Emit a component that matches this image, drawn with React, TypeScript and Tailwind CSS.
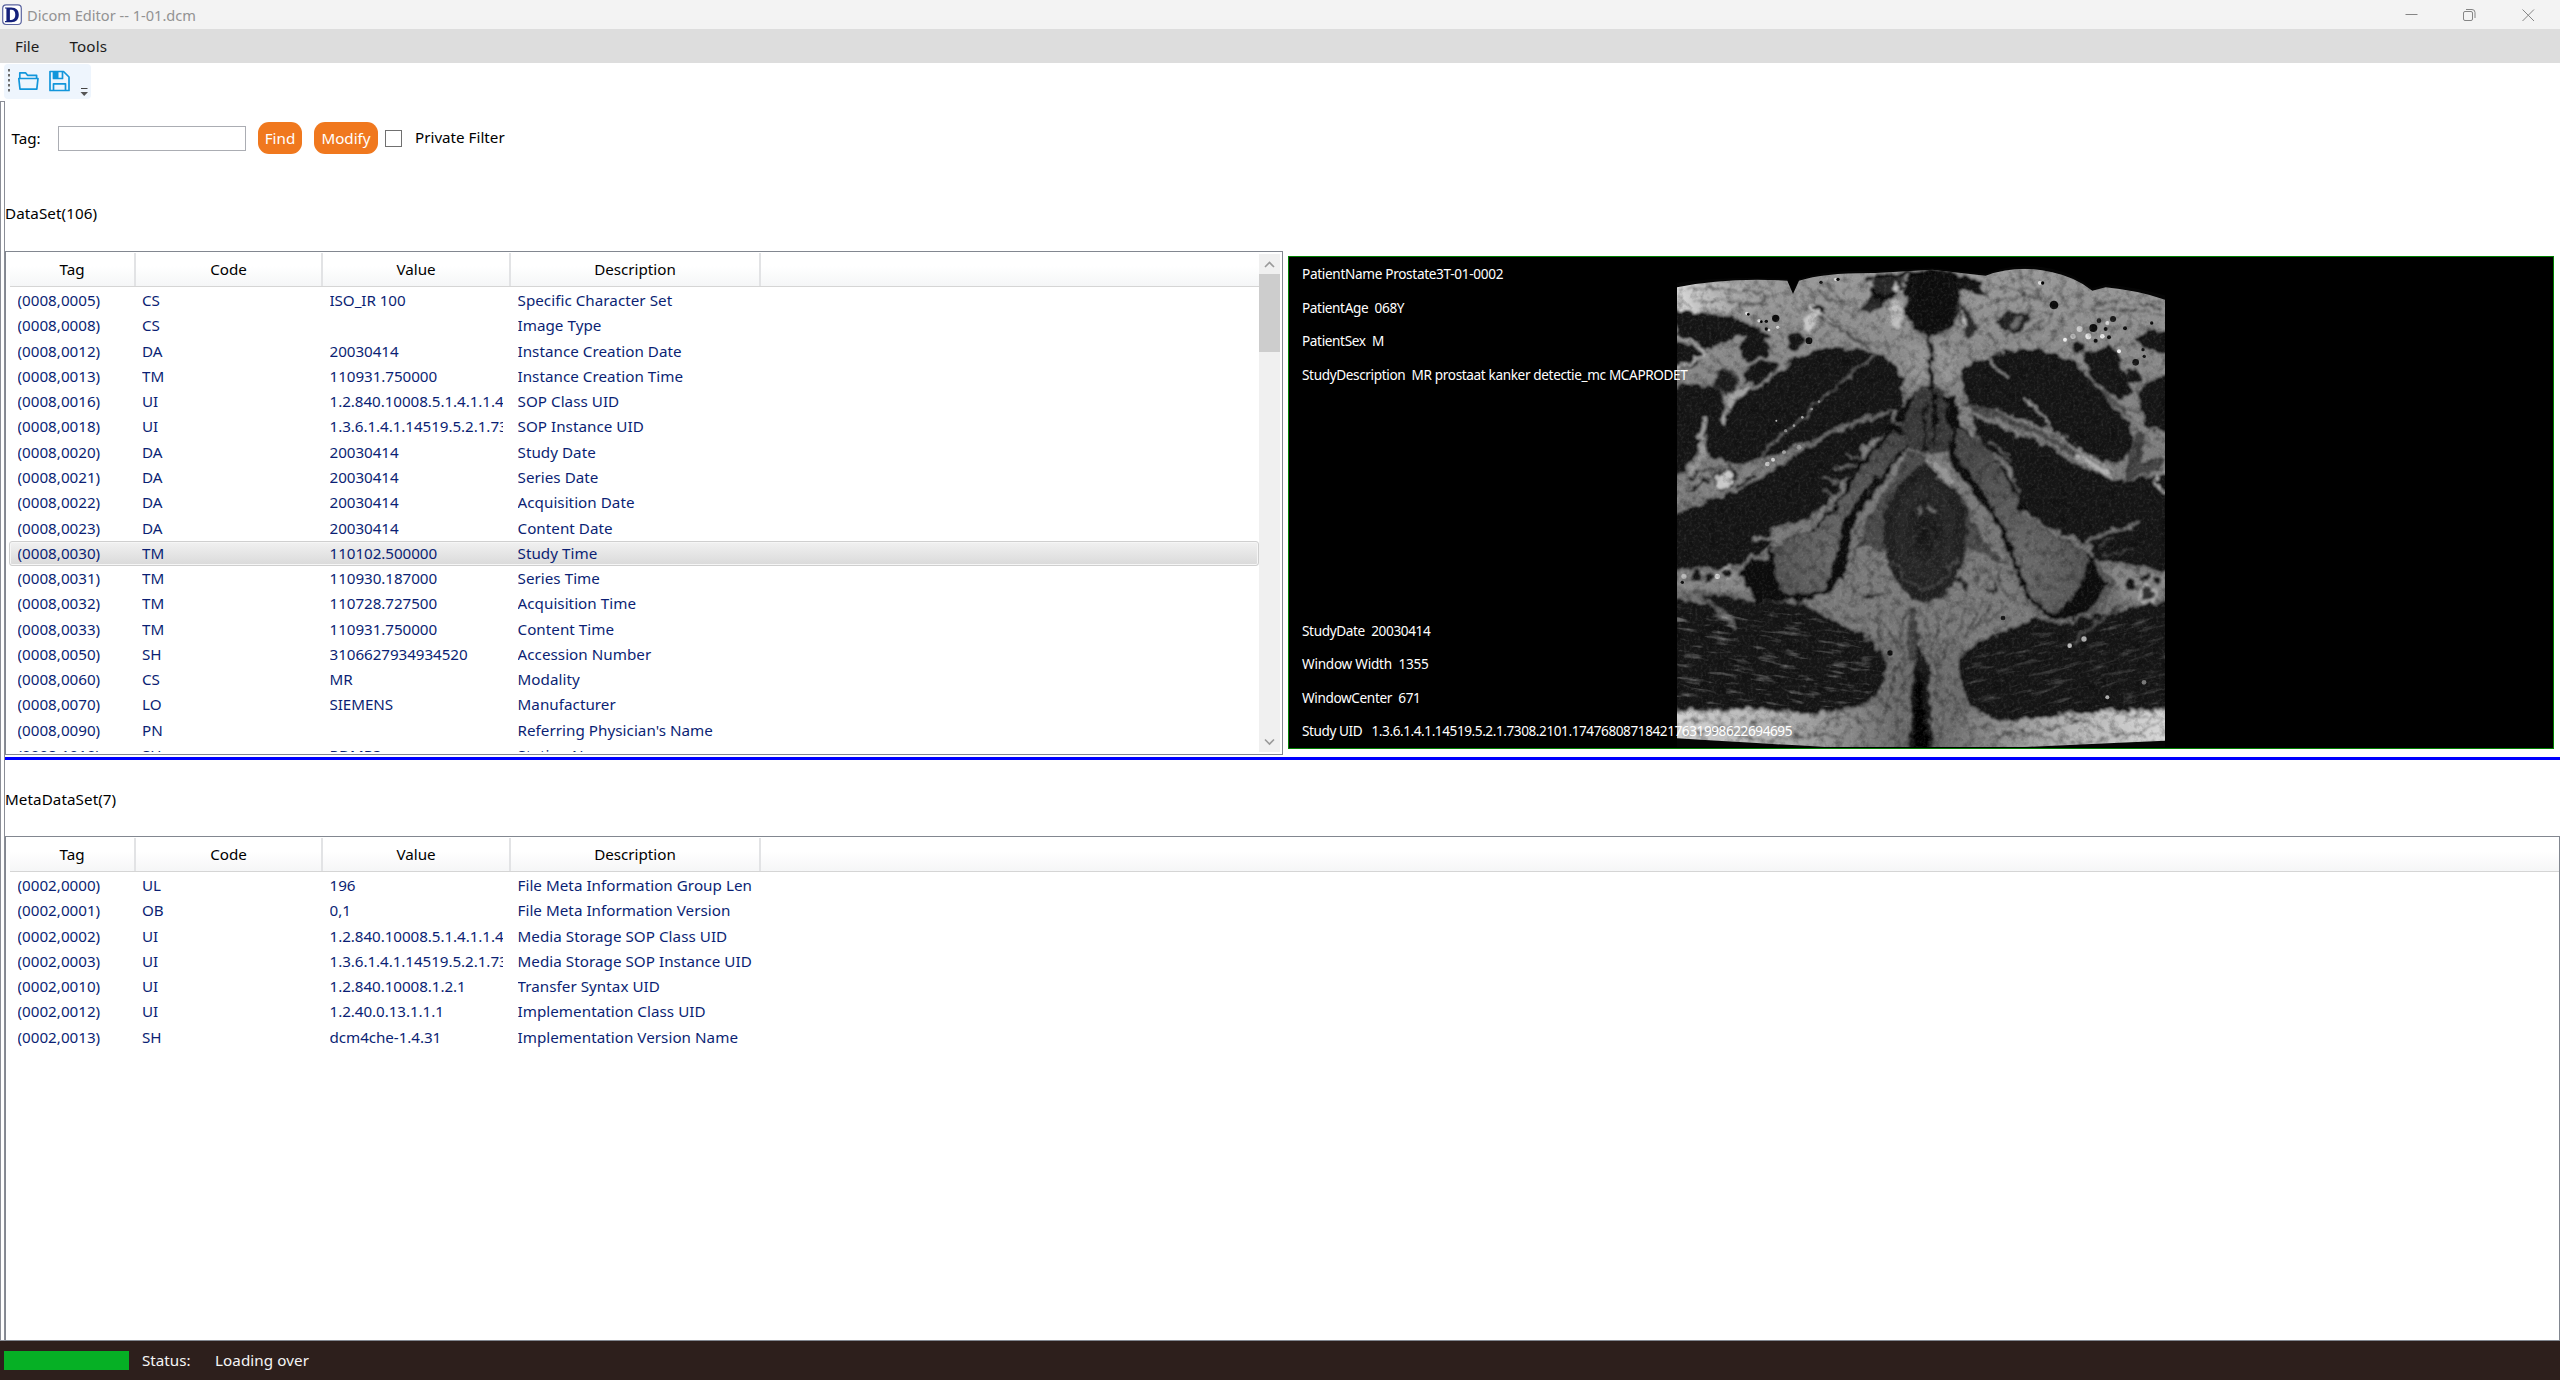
import React from "react";

type Row = [string, string, string, string];

const dataSet: Row[] = [
  ["(0008,0005)", "CS", "ISO_IR 100", "Specific Character Set"],
  ["(0008,0008)", "CS", "", "Image Type"],
  ["(0008,0012)", "DA", "20030414", "Instance Creation Date"],
  ["(0008,0013)", "TM", "110931.750000", "Instance Creation Time"],
  ["(0008,0016)", "UI", "1.2.840.10008.5.1.4.1.1.4", "SOP Class UID"],
  ["(0008,0018)", "UI", "1.3.6.1.4.1.14519.5.2.1.7308", "SOP Instance UID"],
  ["(0008,0020)", "DA", "20030414", "Study Date"],
  ["(0008,0021)", "DA", "20030414", "Series Date"],
  ["(0008,0022)", "DA", "20030414", "Acquisition Date"],
  ["(0008,0023)", "DA", "20030414", "Content Date"],
  ["(0008,0030)", "TM", "110102.500000", "Study Time"],
  ["(0008,0031)", "TM", "110930.187000", "Series Time"],
  ["(0008,0032)", "TM", "110728.727500", "Acquisition Time"],
  ["(0008,0033)", "TM", "110931.750000", "Content Time"],
  ["(0008,0050)", "SH", "3106627934934520", "Accession Number"],
  ["(0008,0060)", "CS", "MR", "Modality"],
  ["(0008,0070)", "LO", "SIEMENS", "Manufacturer"],
  ["(0008,0090)", "PN", "", "Referring Physician's Name"],
  ["(0008,1010)", "SH", "RDMR3", "Station Name"],
];

const metaDataSet: Row[] = [
  ["(0002,0000)", "UL", "196", "File Meta Information Group Len"],
  ["(0002,0001)", "OB", "0,1", "File Meta Information Version"],
  ["(0002,0002)", "UI", "1.2.840.10008.5.1.4.1.1.4", "Media Storage SOP Class UID"],
  ["(0002,0003)", "UI", "1.3.6.1.4.1.14519.5.2.1.7308", "Media Storage SOP Instance UID"],
  ["(0002,0010)", "UI", "1.2.840.10008.1.2.1", "Transfer Syntax UID"],
  ["(0002,0012)", "UI", "1.2.40.0.13.1.1.1", "Implementation Class UID"],
  ["(0002,0013)", "SH", "dcm4che-1.4.31", "Implementation Version Name"],
];

function Table({ rows, selected }: { rows: Row[]; selected?: number }) {
  const head = "flex items-center justify-center border-r-2 border-[#e2e3e5] pb-[1px]";
  const cell = "overflow-hidden whitespace-nowrap";
  return (
    <div className="mb-[2px] flex min-w-0 flex-1 flex-col overflow-hidden pl-[3px]">
      <div className="ml-[1px] mt-[1px] flex h-[34px] shrink-0 border-b border-[#d5d5d5] bg-gradient-to-b from-white from-40% to-[#f5f6f7] text-black">
        <div className={`${head} w-[126px]`}>Tag</div>
        <div className={`${head} w-[187px]`}>Code</div>
        <div className={`${head} w-[188px]`}>Value</div>
        <div className={`${head} w-[250px]`}>Description</div>
      </div>
      <div className="pt-[1px]">
        {rows.map((r, i) => (
          <div
            key={r[0]}
            className={
              i === selected
                ? "flex h-[25.27px] items-center rounded-[3px] border border-[#cfcfcf] bg-gradient-to-b from-[#f1f1f1] to-[#dadada] pb-[1px] pl-[7.500px] text-[#0b1f74] shadow-[inset_0_0_0_1px_#f6f6f6]"
                : "flex h-[25.27px] items-center pb-[1px] pl-[8.500px] text-[#0b1f74]"
            }
          >
            <div className={`${cell} w-[124.500px]`}>{r[0]}</div>
            <div className={`${cell} w-[187.500px]`}>{r[1]}</div>
            <div className={`${cell} mr-[14.500px] w-[173.500px] tracking-[-0.060px]`}>{r[2]}</div>
            <div className={`${cell} w-[238px] tracking-[0.040px]`}>{r[3]}</div>
          </div>
        ))}
      </div>
    </div>
  );
}

function Chevron({ d }: { d: string }) {
  return (
    <svg width="21" height="22" viewBox="0 0 21 22" fill="none" stroke="#9a9a9a" strokeWidth="1.6">
      <path d={d} />
    </svg>
  );
}

const specks: [number, number, number, string][] = [
  [263, 193, 5, "#ddd"], [268, 196, 4, "#000"], [300, 215, 5, "#eee"], [307, 218, 4, "#000"], [322, 217, 5, "#000"],
  [350, 208, 11, "#0c0c0c"], [322, 240, 5, "#111"], [356, 235, 5, "#eee"], [330, 243, 4, "#ddd"], [486, 100, 5, "#111"],
  [530, 91, 5, "#ddd"], [537, 91, 5, "#000"], [1143, 101, 6, "#eee"], [1151, 102, 5, "#000"], [1185, 168, 13, "#0e0e0e"],
  [1303, 237, 12, "#111"], [1288, 262, 9, "#eee"], [1330, 262, 7, "#eee"], [1242, 262, 8, "#ddd"],
  [1262, 240, 9, "#ccc"], [1218, 272, 6, "#eee"], [1340, 240, 6, "#111"], [1362, 210, 9, "#1a1a1a"], [1398, 238, 6, "#111"],
  [1478, 222, 5, "#111"], [1380, 307, 6, "#eee"], [1452, 302, 5, "#111"], [1456, 322, 5, "#111"],
  [1430, 340, 10, "#151515"], [1320, 215, 7, "#222"], [1350, 265, 6, "#111"], [1310, 275, 6, "#0e0e0e"], [1345, 222, 6, "#ddd"],
  [693, 1212, 8, "#111"], [1032, 1107, 7, "#151515"], [1232, 1190, 7, "#bbb"], [1275, 1170, 8, "#aaa"], [1345, 1345, 6, "#bbb"],
  [1455, 1300, 7, "#777"], [75, 982, 8, "#bbb"], [70, 1000, 5, "#111"], [450, 275, 10, "#111"], [175, 982, 8, "#ddd"],
  [352, 515, 3, "#bbb"], [380, 545, 5, "#999"], [405, 530, 4, "#aaa"], [430, 505, 4, "#aaa"], [458, 480, 4, "#999"],
  [480, 458, 4, "#888"], [325, 645, 7, "#ccc"], [342, 632, 6, "#ddd"], [375, 610, 6, "#aaa"], [420, 595, 7, "#aaa"],
];

const fatLines = [
  "M110 150Q220 165 330 165M90 120Q200 110 330 140M430 120Q520 130 590 210M440 180Q520 230 600 280M480 200Q560 250 640 300M500 100Q540 150 560 170M330 130Q300 170 240 170",
  "M1000 110Q1070 130 1150 120M1010 160Q1080 130 1180 150M1080 70Q1100 120 1090 170M1190 180Q1160 230 1120 260M1240 190Q1380 170 1518 200M1220 210Q1180 250 1160 290M1300 170Q1400 150 1510 180",
  "M1030 260Q1100 220 1140 200M1050 275Q1120 240 1150 215M970 230L1010 280M1210 110Q1190 150 1230 180M1120 90L1145 150",
  "M740 1080Q720 1180 735 1290M700 1080Q735 1130 715 1210M660 1110Q710 1150 700 1190M830 1080Q850 1190 835 1290M870 1070Q870 1160 850 1250M920 1070Q900 1150 880 1180M960 1060Q950 1120 910 1170M800 1100Q810 1200 830 1250",
  "M620 1090Q660 1120 670 1170M1000 1070Q960 1120 940 1140M1040 1080Q1000 1100 980 1130M700 1310Q690 1370 660 1420M740 1300Q700 1370 720 1450M830 1320Q860 1380 850 1460M880 1330Q900 1390 930 1420M720 1240Q700 1300 690 1330",
  "M560 960Q600 1000 580 1050M640 930Q620 990 650 1020M950 920Q940 980 960 1010M990 940Q970 990 940 1000M1020 970Q1020 1010 1050 1050",
  "M70 1420Q120 1400 170 1430T280 1425T390 1440T500 1430T620 1440M110 1450Q180 1440 240 1460T400 1465T560 1470M940 1440Q1020 1420 1080 1440T1200 1430T1330 1440T1500 1420M980 1470Q1080 1440 1180 1470T1400 1450M1200 1400Q1260 1410 1300 1395T1480 1410",
];

function Scan() {
  return (
    <svg className="h-[490px] w-[488px]" viewBox="54 24 1464 1470" preserveAspectRatio="none">
      <defs>
        <linearGradient id="fat" x1="0" y1="0" x2="0" y2="1">
          <stop offset="0" stopColor="#9a9a9a" />
          <stop offset="0.3" stopColor="#808080" />
          <stop offset="0.6" stopColor="#747474" />
          <stop offset="0.9" stopColor="#6c6c6c" />
          <stop offset="1" stopColor="#828282" />
        </linearGradient>
        <linearGradient id="strip" x1="0" y1="0" x2="1" y2="0">
          <stop offset="0" stopColor="#d4d4d4" />
          <stop offset="0.25" stopColor="#a8a8a8" />
          <stop offset="0.5" stopColor="#5e5e5e" />
          <stop offset="0.75" stopColor="#aaa" />
          <stop offset="1" stopColor="#dadada" />
        </linearGradient>
        <linearGradient id="left" x1="0" y1="0" x2="1" y2="0">
          <stop offset="0" stopColor="#eee" stopOpacity="0.85" />
          <stop offset="1" stopColor="#999" stopOpacity="0" />
        </linearGradient>
        <radialGradient id="bone" cx="0.5" cy="0.75" r="0.7">
          <stop offset="0" stopColor="#6c6c6c" />
          <stop offset="1" stopColor="#4a4a4a" />
        </radialGradient>
        <radialGradient id="rectum">
          <stop offset="0" stopColor="#181818" />
          <stop offset="0.35" stopColor="#222" />
          <stop offset="0.6" stopColor="#2c2c2c" />
          <stop offset="0.8" stopColor="#222" />
          <stop offset="1" stopColor="#262626" />
        </radialGradient>
        <filter id="soft" x="-5%" y="-5%" width="110%" height="110%">
          <feTurbulence type="fractalNoise" baseFrequency="0.035" numOctaves="3" seed="4" result="n" />
          <feDisplacementMap in="SourceGraphic" in2="n" scale="32" xChannelSelector="R" yChannelSelector="G" />
          <feGaussianBlur stdDeviation="3.2" />
        </filter>
        <filter id="blur8" x="-30%" y="-30%" width="160%" height="160%">
          <feGaussianBlur stdDeviation="11" />
        </filter>
        <filter id="blur3" x="0" y="0" width="100%" height="100%">
          <feGaussianBlur stdDeviation="1.5" />
        </filter>
        <filter id="grain" x="0" y="0" width="100%" height="100%">
          <feTurbulence type="fractalNoise" baseFrequency="0.12" numOctaves="2" seed="9" />
          <feColorMatrix values="0 0 0 0 1  0 0 0 0 1  0 0 0 0 1  1.6 0 0 0 -0.72" />
        </filter>
        <filter id="grainDark" x="0" y="0" width="100%" height="100%">
          <feTurbulence type="fractalNoise" baseFrequency="0.04" numOctaves="4" seed="21" />
          <feColorMatrix values="0 0 0 0 0  0 0 0 0 0  0 0 0 0 0  1.8 0 0 0 -0.8" />
        </filter>
        <filter id="fibres" x="0" y="0" width="100%" height="100%">
          <feTurbulence type="fractalNoise" baseFrequency="0.014 0.075" numOctaves="3" seed="6" />
          <feColorMatrix values="0 0 0 0 0.62  0 0 0 0 0.62  0 0 0 0 0.62  3.4 0 0 0 -1.85" />
        </filter>
        <clipPath id="glutes">
          <path d="M54 1060L130 1090L420 1085C520 1120 630 1170 665 1235C675 1290 650 1340 595 1355C500 1385 420 1378 340 1368L54 1365ZM1518 1080L1400 1110L1200 1145L1130 1128C1050 1160 970 1180 920 1230C910 1300 935 1365 980 1382C1050 1405 1150 1400 1240 1375L1518 1365Z" />
        </clipPath>
        <clipPath id="frame">
          <rect x="54" y="24" width="1464" height="1470" />
        </clipPath>
        <clipPath id="body">
          <path d="M54 115Q200 85 385 95L402 135L420 95Q500 70 650 72L820 62L980 80Q1080 45 1180 70Q1250 85 1300 125L1340 115Q1440 125 1518 152V1475Q1300 1485 1100 1494H500Q250 1480 54 1468Z" />
        </clipPath>
      </defs>
      <rect x="54" y="24" width="1464" height="1470" fill="#050505" />
      <g clipPath="url(#body)">
        <g filter="url(#soft)">
          <rect x="34" y="44" width="1504" height="1470" fill="url(#fat)" />
          <path d="M34 100H420V180L54 190Z" fill="url(#left)" />

          <g fill="#181818">
            <path d="M40 190Q150 185 250 215Q310 240 350 270L290 265L230 265L150 300L54 268Z" />
            <path d="M40 275Q120 290 138 322Q120 350 54 365Z" />
            <path d="M40 415Q120 395 180 425Q205 450 190 500L135 570L118 610L40 700Z" />
            <path d="M210 470Q320 400 400 335Q480 285 560 300Q640 290 700 345Q745 385 735 420L720 480L640 500Q520 540 420 600L240 645Q160 645 140 600Q140 540 210 470Z" />
            <path d="M40 800L240 720Q330 680 420 610Q540 540 700 490L700 540L600 600L620 650L550 700L520 770L440 810L330 840L340 890L230 950L40 965Z" />
            <path d="M905 370Q940 320 1010 320L1060 300Q1150 290 1260 350L1330 440L1400 510Q1430 560 1410 620L1350 640Q1270 620 1170 540L1040 490L920 470Z" />
            <path d="M940 500L1090 560Q1180 580 1230 640L1380 700L1538 780V970L1310 930L1290 890L1190 850L1100 810L1060 720L1060 660L960 580Z" />
            <path d="M1270 310Q1340 290 1390 340L1420 430L1380 450L1300 400Z" />
            <path d="M1415 275Q1460 240 1538 242V322L1460 295Z" />
            <path d="M1538 380Q1460 390 1440 430Q1430 500 1480 540L1538 560Z" />
            <path d="M1380 700L1490 680L1538 690V800L1400 770Z" />
          </g>

          <path d="M34 1040L130 1070L420 1065C520 1110 640 1160 680 1235C690 1290 660 1350 600 1368C500 1400 420 1392 340 1380L34 1378ZM1538 1050L1400 1080L1200 1125L1130 1108C1050 1140 960 1170 905 1225C895 1300 920 1370 970 1395C1050 1420 1150 1415 1240 1388L1538 1380Z" fill="#191919" />
          <path d="M130 1030L280 1060L420 1060L640 1170L300 1160L150 1080Z" fill="#171717" />

          <path d="M34 1382L340 1385Q430 1398 520 1392L640 1368Q700 1400 780 1440Q860 1430 930 1390Q1050 1425 1150 1410L1300 1385L1538 1390V1520H34Z" fill="url(#strip)" />

          {/* pelvic rami */}
          <path d="M700 520Q770 540 745 600L640 720Q590 790 575 870Q570 980 500 1045Q400 1080 345 1020L330 900L470 830Q540 770 570 690Z" fill="#070707" />
          <path d="M700 545Q755 560 735 605L620 720Q560 790 545 860Q530 960 490 1020Q430 1055 365 1025Q340 960 345 895L480 830Q560 760 590 680Z" fill="url(#bone)" />
          <path d="M850 440L890 440L900 520Q990 600 1050 680Q1080 790 1180 850L1300 920L1345 990Q1330 1090 1240 1110L1180 1110Q1090 1060 1070 960L1000 800L870 640Z" fill="#080808" />
          <path d="M895 540Q960 560 1000 620Q1050 690 1090 790L1190 860L1280 910Q1300 970 1250 1030L1190 1095Q1110 1070 1090 980Q1060 860 990 760L905 640Q880 580 895 540Z" fill="url(#bone)" />
          <path d="M1290 970L1345 1000Q1330 1080 1250 1105L1205 1095Q1230 1050 1275 1020Z" fill="#0a0a0a" />
          <path d="M245 960Q290 920 335 940L355 1020L390 1055L290 1060L255 1000Z" fill="#0a0a0a" />

          {/* midline */}
          <path d="M760 430L720 530L745 600L800 620L870 600L880 540L850 430L820 400Z" fill="#3b3b3b" />
          <path d="M770 425L715 480L705 530L740 510ZM850 425L895 470L890 550L865 510Z" fill="#0b0b0b" />
          <path d="M815 250Q812 400 830 500L820 600M800 460Q790 560 800 610M745 590L640 730L590 800M870 570L900 660L990 760" fill="none" stroke="#0d0d0d" strokeWidth="9" />
          <path d="M735 90Q800 50 890 70Q960 100 1000 150Q940 110 905 130L895 200Q880 255 815 260Q755 250 735 190Q750 140 735 90Z" fill="#161616" />
          <path d="M650 75L740 70L730 110L690 150L650 190L595 185L640 140ZM900 150L960 240L930 270L900 210Z" fill="#2b2b2b" />
          <path d="M620 90Q720 65 800 85Q900 60 960 110M660 160Q720 120 760 110M780 90Q860 100 890 90M640 120L670 160" fill="none" stroke="#111" strokeWidth="13" />
          <path d="M700 150L680 220L720 250L740 190ZM905 170L925 230L910 250" fill="#b9b9b9" />
          <path d="M700 110L740 130M690 180L720 170M730 210L700 230" stroke="#c4c4c4" strokeWidth="10" fill="none" />
          <path d="M1010 215Q1060 180 1110 190Q1110 240 1070 255Q1030 240 1010 215Z" fill="#202020" />
          <path d="M1050 230Q1060 200 1090 205Q1080 240 1060 240Z" fill="#6d6d6d" />
          <path d="M740 285L800 290L800 400L770 410L740 360ZM830 290L900 300L900 370L865 410L840 360Z" fill="#949494" />
          <path d="M815 250L812 420" stroke="#111" strokeWidth="12" />

          {/* canal */}
          <path d="M745 610L800 625Q900 700 1000 900L1070 980L930 960L700 920L575 940L600 820Q640 760 700 700Z" fill="#4b4b4b" />
          <path d="M600 900Q640 880 680 920L720 1010Q780 1080 870 1030Q910 970 930 890L1040 950L1080 1050L1130 1100L930 1190L780 1150L640 1170L440 1060L520 1030Z" fill="#7a7a7a" />
          <path d="M800 640Q710 690 680 790Q655 900 710 990Q750 1060 800 1060Q860 1055 895 980Q935 880 925 790Q890 690 800 640Z" fill="url(#rectum)" />
          <path d="M800 628L830 630L900 710L880 720L830 680Z" fill="#959595" />
          <path d="M755 1060L765 1240L750 1500H820L810 1240L780 1200Z" fill="#1d1d1d" />
          <path d="M775 1250L765 1500H808Z" fill="#060606" />
          <path d="M760 1080V1230" stroke="#4a4a4a" strokeWidth="26" fill="none" />

          {/* fascia and vessels */}
          <g fill="none" stroke="#999" strokeLinecap="round">
            <path d="M54 262Q130 285 140 320L54 360" strokeWidth="8" stroke="#b5b5b5" />
            <path d="M135 515Q120 560 130 610Q90 680 54 745" strokeWidth="18" />
            <path d="M240 690Q300 660 350 630L450 585" strokeWidth="19" stroke="#777" />
            <path d="M450 585Q540 530 670 495" strokeWidth="11" stroke="#6b6b6b" />
            <path d="M300 620Q360 570 420 515L510 432Q580 370 650 320" strokeWidth="6" stroke="#666" />
            <path d="M920 470Q1040 500 1150 560L1230 600L1350 670" strokeWidth="20" stroke="#4c4c4c" />
            <path d="M1100 445L1170 530L1250 600L1360 660" strokeWidth="8" stroke="#999" />
            <path d="M1260 625L1350 675" strokeWidth="18" stroke="#b4b4b4" />
            <path d="M970 320L1050 390" strokeWidth="7" />
            <path d="M1330 430L1440 520L1500 570" strokeWidth="14" stroke="#505050" />
            <path d="M1440 570L1420 670L1500 640" strokeWidth="34" stroke="#454545" />
            <path d="M290 870L340 865L430 830L510 770L550 710" strokeWidth="11" stroke="#7c7c7c" />
            <path d="M490 690L550 705M500 730L540 740M560 620L610 630M520 660L590 650M370 830L400 855" strokeWidth="6" stroke="#666" />
            <path d="M1090 790L1190 855L1280 885L1330 855L1440 820" strokeWidth="9" stroke="#777" />
            <path d="M1000 610L1060 640M990 580L1050 620M1060 700L1080 730" strokeWidth="6" stroke="#666" />
            <path d="M100 1020L190 1090L230 1135" strokeWidth="18" stroke="#5d5d5d" />
            <path d="M1400 1060L1310 1120L1250 1180" strokeWidth="10" stroke="#4c4c4c" />
            <path d="M1310 950L1360 1000L1300 1090" strokeWidth="15" stroke="#5a5a5a" />
            <path d="M700 690L620 800L590 890M930 790L1000 900L1040 940" strokeWidth="8" stroke="#7b7b7b" />
            <path d="M1330 920L1420 900M1320 890L1360 870" strokeWidth="6" stroke="#444" />
          </g>
          <path d="M1385 460L1425 425L1440 510L1500 560L1480 570L1420 510Z" fill="#848484" />
          <path d="M195 430L300 405L230 455L190 530L180 520L205 470Z" fill="#a2a2a2" />
          <path d="M60 975L240 965L280 1050L230 1030L110 1025L54 1010ZM1330 960Q1420 950 1518 985V1050L1400 1075L1380 1010Z" fill="#868686" />
          <path d="M54 700L130 650L240 670L300 640L240 730L150 740L90 720L54 770Z" fill="#808080" />
          <path d="M80 700Q120 660 160 665M90 730L150 690M210 650L235 690M230 720Q260 690 290 680" fill="none" stroke="#1a1a1a" strokeWidth="9" />
          <circle cx="195" cy="692" r="30" fill="#c9c9c9" stroke="#2e2e2e" strokeWidth="5" />
          <g fill="#171717">
            <circle cx="288" cy="297" r="42" />
            <circle cx="408" cy="276" r="28" />
            <circle cx="200" cy="398" r="37" fill="#1e1e1e" stroke="#484848" strokeWidth="6" />
            <ellipse cx="300" cy="368" rx="62" ry="33" transform="rotate(-28 300 368)" stroke="#858585" strokeWidth="10" />
            <circle cx="1345" cy="330" r="40" />
            <circle cx="1258" cy="295" r="20" />
            <circle cx="1425" cy="382" r="21" />
            <circle cx="1465" cy="1035" r="26" fill="#333" stroke="#aaa" strokeWidth="9" />
            <circle cx="1415" cy="1010" r="15" />
            <circle cx="1460" cy="985" r="11" />
            <circle cx="1495" cy="1000" r="10" />
            <circle cx="110" cy="980" r="15" />
            <circle cx="150" cy="985" r="13" />
            <circle cx="200" cy="970" r="17" stroke="#bbb" strokeWidth="5" />
            <circle cx="1520" cy="700" r="28" stroke="#aaa" strokeWidth="8" />
          </g>
          <path d="M590 1030L650 1040L690 1045L640 1050ZM1020 1000L975 1030L1010 1035ZM885 990Q930 980 925 1030" fill="#2a2a2a" />
          <path d="M455 170L490 185L470 215L455 260L435 230Z" fill="#c9c9c9" />
          <path d="M465 180Q480 160 495 190" stroke="#111" strokeWidth="13" fill="none" />
          <g fill="none" stroke="#303030" strokeWidth="4" opacity="0.75">
            {fatLines.map((d) => (
              <path key={d} d={d} />
            ))}
          </g>
          <g fill="none" stroke="#383838" strokeWidth="7">
            <ellipse cx="795" cy="895" rx="35" ry="55" stroke="#303030" />
            <ellipse cx="797" cy="880" rx="72" ry="105" stroke="#2b2b2b" />
            <path d="M700 930Q740 1010 800 1020Q860 1010 890 930" stroke="#454545" />
            <path d="M778 800L785 770M812 770L825 790" stroke="#747474" />
          </g>
        </g>
        <g filter="url(#blur8)" opacity="0.8">
          <path d="M760 80L880 70L900 180L860 250L780 250L750 180Z" fill="#0b0b0b" />
          <path d="M780 1270V1500" stroke="#000" strokeWidth="22" />
        </g>
        <g clipPath="url(#glutes)">
          <g transform="rotate(7 380 1240)">
            <rect x="0" y="950" width="760" height="560" filter="url(#fibres)" opacity="0.42" />
          </g>
          <g transform="rotate(-14 1200 1250)">
            <rect x="830" y="930" width="760" height="620" filter="url(#fibres)" opacity="0.26" />
          </g>
        </g>
        <g filter="url(#blur3)">
          {specks.map(([x, y, r, c]) => (
            <circle key={`${x}-${y}`} cx={x} cy={y} r={r} fill={c} />
          ))}
        </g>
        <rect x="54" y="24" width="1464" height="1470" filter="url(#grainDark)" opacity="0.4" />
        <rect x="54" y="24" width="1464" height="1470" filter="url(#grain)" opacity="0.14" />
      </g>
      <g clipPath="url(#frame)">
        <path d="M30 105Q200 80 385 90L402 130L420 90Q500 62 650 66L820 58L980 74Q1080 36 1180 60Q1250 76 1300 118L1340 106Q1440 116 1540 146V10H30Z" fill="#050505" filter="url(#blur3)" />
      </g>
    </svg>
  );
}

export default function App() {
  return (
    <div className="flex h-[1380px] w-[2560px] flex-col overflow-hidden bg-white font-['Noto_Sans','Open_Sans',sans-serif] text-[15.2px] leading-[20px] text-black">
      <header className="flex h-[29px] shrink-0 items-center bg-[#f3f3f3] pl-[2px]">
        <svg width="20" height="22" viewBox="0 0 20 22">
          <rect x="0.7" y="0.9" width="18.6" height="19.6" rx="3.5" fill="#fff" stroke="#5a639f" strokeWidth="1.2" />
          <path d="M3 3.4H9.2C14.3 3.4 16.8 6.300 16.800 10.700C16.800 15.200 14.200 18.200 9.200 18.200H3V17H4.400V4.600H3ZM7.900 5.700V15.900H9.200C11.900 15.900 13.300 14 13.300 10.700C13.300 7.500 11.900 5.700 9.300 5.700Z" fill="#14207a" />
        </svg>
        <span className="ml-[5px] text-[14.6px] text-[#929292]">Dicom Editor -- 1-01.dcm</span>
        <div className="ml-auto flex items-center pr-[24px] text-[#858585]">
          <svg width="132" height="16" viewBox="0 0 132 16" fill="none" stroke="currentColor" strokeWidth="1">
            <path d="M1.500 7.500H13.500" />
            <rect x="59.500" y="4.500" width="9" height="9" rx="1.500" />
            <path d="M62 2.500H68Q71 2.500 71 5.500V11" />
            <path d="M118.500 2.500L130 14M130 2.500L118.500 14" />
          </svg>
        </div>
      </header>

      <nav className="flex h-[34px] shrink-0 items-center bg-[#dddddd] pl-[15px] text-[#1c1c1c]">
        <span className="w-[54.500px]">File</span>
        <span className="tracking-[0.150px]">Tools</span>
      </nav>

      <div className="flex h-[38px] shrink-0 pl-[4px] pt-[1px]">
        <div className="flex h-[35px] w-[87px] rounded-[4px] bg-[#eef5fd]">
          <svg width="87" height="35" viewBox="0 0 87 35" fill="none">
            <path d="M5 5V28" stroke="#6d6d6d" strokeWidth="2" strokeDasharray="2.500 2.500" />
            <g stroke="#1296db" strokeWidth="1.700" strokeLinejoin="round">
              <path d="M15.800 14V8.800H21.500L23.500 11.300H32.600V14.300" />
              <path d="M14.800 14.500H34L32.800 25.200H16Z" />
              <path d="M46 7.500H59.500L65 13V26.500H46Z" />
              <path d="M49.500 26.500V19.800H61.500V26.500M49.500 7.500V14.500H58.500V7.500" />
            </g>
            <path d="M49.500 7.500H54.500V14.500H49.500Z" fill="#1296db" />
            <path d="M77 24.500H83.500" stroke="#444" strokeWidth="1" />
            <path d="M76.500 28H84L80.200 32Z" fill="#555" />
          </svg>
        </div>
      </div>

      <main className="flex h-[1240px] shrink-0">
        <div className="w-[5px] shrink-0 border border-[#8a8d96]" />
        <div className="flex min-w-0 flex-1 flex-col">
          <section className="flex h-[150px] shrink-0 flex-col">
            <div className="flex h-[74px] items-center pl-[6.500px]">
              <span className="w-[46.500px]">Tag:</span>
              <div className="h-[25px] w-[188px] border border-[#abadb3]" />
              <button className="ml-[12px] h-[32px] w-[44px] rounded-[11px] bg-[#f0781e] pb-[1px] text-white">Find</button>
              <button className="ml-[12px] h-[32px] w-[64px] rounded-[11px] bg-[#f0781e] pb-[1px] text-white">Modify</button>
              <div className="ml-[7px] h-[17px] w-[17px] border border-[#707070]" />
              <span className="ml-[13px] -mt-[2px]">Private Filter</span>
            </div>
            <div className="flex h-[75px] items-center tracking-[0.080px]">DataSet(106)</div>
          </section>

          <section className="flex h-[506px] shrink-0">
            <div className="flex h-[504px] w-[1278px] shrink-0 border border-[#828790]">
              <Table rows={dataSet} selected={10} />
              <div className="my-[2px] mr-[2px] flex w-[21px] shrink-0 flex-col bg-[#f0f0f0]">
                <div className="h-[20px]">
                  <Chevron d="M6 13L10.500 8.500L15 13" />
                </div>
                <div className="h-[78px] bg-[#cdcdcd]" />
                <div className="mt-auto h-[22px]">
                  <Chevron d="M6 9.500L10.500 14L15 9.500" />
                </div>
              </div>
            </div>
            <div className="relative ml-[5px] mt-[5px] flex h-[493px] w-[1266px] justify-center border border-[#008000] bg-black text-[13.600px] tracking-[-0.370px] text-white">
              <Scan />
              <div className="absolute inset-0 flex flex-col justify-between whitespace-pre pb-[7px] pl-[13px] pt-[7px]">
                <div className="flex flex-col gap-[13.500px]">
                  <span className="tracking-[-0.320px]">PatientName Prostate3T-01-0002</span>
                  <span>PatientAge  068Y</span>
                  <span>PatientSex  M</span>
                  <span>StudyDescription  MR prostaat kanker detectie_mc MCAPRODET</span>
                </div>
                <div className="flex flex-col gap-[13.300px]">
                  <span>StudyDate  20030414</span>
                  <span className="tracking-[-0.250px]">Window Width  1355</span>
                  <span>WindowCenter  671</span>
                  <span className="tracking-[-0.430px]">Study UID   1.3.6.1.4.1.14519.5.2.1.7308.2101.174768087184217631998622694695</span>
                </div>
              </div>
            </div>
          </section>

          <div className="h-[3px] shrink-0 bg-[#0000ff]" />
          <div className="flex h-[76px] shrink-0 items-center pt-[1px] tracking-[0.080px]">MetaDataSet(7)</div>
          <section className="flex h-[505px] shrink-0 border border-[#828790]">
            <Table rows={metaDataSet} />
          </section>
        </div>
      </main>

      <footer className="flex h-[39px] shrink-0 items-center bg-[#2d1f1c] pl-[4px] text-[#f5f5f5]">
        <div className="h-[19px] w-[125px] bg-[#06b025]" />
        <span className="ml-[13px] w-[73px] pb-[1px]">Status:</span>
        <span className="pb-[1px] tracking-[0.080px]">Loading over</span>
      </footer>
    </div>
  );
}
